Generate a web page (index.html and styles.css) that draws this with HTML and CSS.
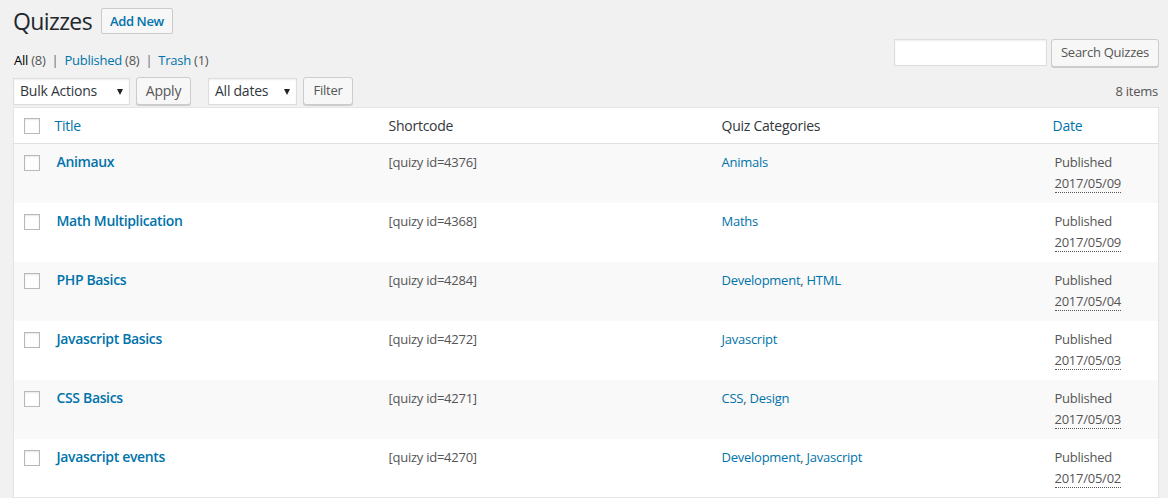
FILE: index.html
```html
<!DOCTYPE html>
<html>
<head>
<meta charset="utf-8">
<link rel="stylesheet" href="styles.css">
</head>
<body>
<div class="wrap">
  <div class="head">
    <h1 class="page-title">Quizzes</h1>
    <a class="add-new">Add New</a>
  </div>
  <div class="toprow">
    <ul class="subsubsub">
      <li><span class="current">All</span> <span class="count">(8)</span></li>
      <li class="sep">|</li>
      <li><a>Published <span class="count">(8)</span></a></li>
      <li class="sep">|</li>
      <li><a>Trash <span class="count">(1)</span></a></li>
    </ul>
    <div class="search-box">
      <span class="search-input"></span>
      <span class="button btn-search">Search Quizzes</span>
    </div>
  </div>
  <div class="tablenav">
    <div class="actions">
      <span class="select sel-bulk">Bulk Actions</span>
      <span class="button btn-apply">Apply</span>
      <span class="select sel-dates">All dates</span>
      <span class="button btn-filter">Filter</span>
    </div>
    <div class="num-items">8 items</div>
  </div>
  <table class="list">
    <colgroup>
      <col class="c-check"><col class="c-title"><col class="c-short"><col class="c-cat"><col class="c-date">
    </colgroup>
    <thead>
      <tr>
        <th class="check"><span class="cb"></span></th>
        <th class="sortable"><a>Title</a></th>
        <th class="plain">Shortcode</th>
        <th class="plain">Quiz Categories</th>
        <th class="sortable"><a>Date</a></th>
      </tr>
    </thead>
    <tbody>
      <tr class="alt">
        <th class="check"><span class="cb"></span></th>
        <td><a class="row-title">Animaux</a></td>
        <td>[quizy id=4376]</td>
        <td><a>Animals</a></td>
        <td class="date">Published<br><abbr>2017/05/09</abbr></td>
      </tr>
      <tr>
        <th class="check"><span class="cb"></span></th>
        <td><a class="row-title">Math Multiplication</a></td>
        <td>[quizy id=4368]</td>
        <td><a>Maths</a></td>
        <td class="date">Published<br><abbr>2017/05/09</abbr></td>
      </tr>
      <tr class="alt">
        <th class="check"><span class="cb"></span></th>
        <td><a class="row-title">PHP Basics</a></td>
        <td>[quizy id=4284]</td>
        <td><a>Development</a>, <a>HTML</a></td>
        <td class="date">Published<br><abbr>2017/05/04</abbr></td>
      </tr>
      <tr>
        <th class="check"><span class="cb"></span></th>
        <td><a class="row-title">Javascript Basics</a></td>
        <td>[quizy id=4272]</td>
        <td><a>Javascript</a></td>
        <td class="date">Published<br><abbr>2017/05/03</abbr></td>
      </tr>
      <tr class="alt">
        <th class="check"><span class="cb"></span></th>
        <td><a class="row-title">CSS Basics</a></td>
        <td>[quizy id=4271]</td>
        <td><a>CSS</a>, <a>Design</a></td>
        <td class="date">Published<br><abbr>2017/05/03</abbr></td>
      </tr>
      <tr>
        <th class="check"><span class="cb"></span></th>
        <td><a class="row-title">Javascript events</a></td>
        <td>[quizy id=4270]</td>
        <td><a>Development</a>, <a>Javascript</a></td>
        <td class="date">Published<br><abbr>2017/05/02</abbr></td>
      </tr>
    </tbody>
  </table>
</div>
</body>
</html>
```

FILE: styles.css
```css
* { box-sizing: border-box; }
html, body { margin: 0; padding: 0; }
body {
  background: #f1f1f1;
  color: #444;
  font-family: "Open Sans", "Noto Sans", sans-serif;
  font-size: 13px;
  line-height: 1.4;
  letter-spacing: -0.25px;
  overflow: hidden;
  height: 498px;
}
a { color: #0073aa; text-decoration: none; }

.wrap { padding: 8px 9px 0 13px; }

.head {
  display: flex;
  align-items: center;
  gap: 9px;
  height: 26px;
}
.page-title {
  margin: 0;
  font-size: 23px;
  font-weight: 400;
  color: #23282d;
  line-height: 26px;
  letter-spacing: -0.6px;
}
.add-new {
  display: inline-flex;
  align-items: center;
  height: 26px;
  padding: 0 8px;
  border: 1px solid #ccc;
  border-radius: 2px;
  background: #f7f7f7;
  color: #0073aa;
  font-weight: 600;
  font-size: 13px;
  letter-spacing: -0.4px;
}

.toprow {
  display: flex;
  justify-content: space-between;
  margin-top: 5px;
  height: 28px;
}
.subsubsub {
  list-style: none;
  margin: 0;
  padding: 12px 0 0 1px;
  display: flex;
  gap: 5px;
  line-height: 18px;
  color: #666;
}
.subsubsub .current { color: #000; font-weight: 400; }
.subsubsub .count { color: #555; }
.subsubsub .sep { color: #666; padding: 0 1px; }

.search-box { display: flex; gap: 4px; align-items: flex-start; }
.search-input {
  display: block;
  width: 153px;
  height: 27px;
  background: #fff;
  border: 1px solid #ddd;
  box-shadow: inset 0 1px 2px rgba(0,0,0,.07);
}
.button {
  display: inline-flex;
  align-items: center;
  justify-content: center;
  height: 28px;
  padding: 0 8px 1px;
  background: #f7f7f7;
  border: 1px solid #ccc;
  border-radius: 3px;
  box-shadow: 0 1px 0 #ccc;
  color: #555;
  font-size: 13px;
  white-space: nowrap;
}
.btn-search { width: 108px; }

.tablenav {
  display: flex;
  justify-content: space-between;
  align-items: center;
  margin-top: 10px;
  height: 28px;
}
.actions { display: flex; align-items: center; }
.select {
  position: relative;
  display: inline-flex;
  align-items: center;
  height: 27px;
  padding: 0 24px 0 6px;
  background: #fff;
  border: 1px solid #ddd;
  box-shadow: inset 0 1px 2px rgba(0,0,0,.07);
  color: #32373c;
  font-size: 14px;
}
.select::after {
  content: "";
  position: absolute;
  right: 6px;
  top: 10px;
  border-left: 3.5px solid transparent;
  border-right: 3.5px solid transparent;
  border-top: 6px solid #222;
}
.sel-bulk { width: 117px; }
.btn-apply { width: 55px; margin-left: 6px; font-size: 14px; }
.sel-dates { width: 89px; margin-left: 17px; }
.btn-filter { width: 50px; margin-left: 6px; }
.num-items { color: #555; padding-right: 1px; }

.list {
  margin-top: 2px;
  width: 100%;
  border-collapse: collapse;
  table-layout: fixed;
  background: #fff;
  border: 1px solid #e5e5e5;
  box-shadow: 0 1px 1px rgba(0,0,0,.04);
}
.c-check { width: 33px; }
.c-title { width: 332px; }
.c-short { width: 333px; }
.c-cat { width: 333px; }
.c-date { width: auto; }

.list thead tr { height: 36px; }
.list thead th {
  border-bottom: 1px solid #e1e1e1;
  text-align: left;
  font-weight: 400;
  font-size: 14px;
  color: #32373c;
  vertical-align: middle;
  padding: 1px 0 0;
}
.list thead th.plain { padding: 1px 10px 0; }
.list thead th.sortable a { display: block; padding: 0 8px; color: #0073aa; }
.list thead th.check { padding: 0 0 0 10px; vertical-align: middle; }
.list tbody th.check { vertical-align: top; padding: 11px 0 0 10px; }

.cb {
  display: block;
  width: 16px;
  height: 16px;
  background: #fff;
  border: 1px solid #b4b9be;
  box-shadow: inset 0 1px 2px rgba(0,0,0,.1);
}

.list tbody tr { height: 59px; }
.list tbody tr.alt { background: #f9f9f9; }
.list tbody td {
  vertical-align: top;
  padding: 8px 10px;
  color: #555;
  font-size: 13px;
  line-height: 20px;
}
.row-title {
  font-weight: 600;
  font-size: 14px;
  letter-spacing: -0.35px;
}
.list tbody td.date { line-height: 21px; padding-top: 8px; }
abbr {
  text-decoration: none;
  border-bottom: 1px dotted #555;
}
```
